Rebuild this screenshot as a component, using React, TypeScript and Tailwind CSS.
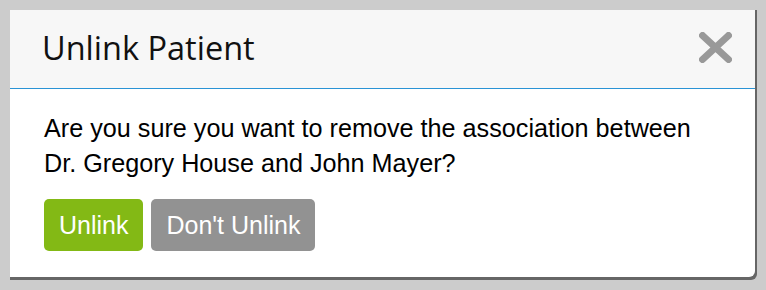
import React from "react";

const CloseIcon = () => (
  <svg width="33" height="31" viewBox="0 0 33 31" fill="none">
    <path d="M3.5 3.5 L29.5 27.5 M29.5 3.5 L3.5 27.5" stroke="#999999" strokeWidth="7" strokeLinecap="round" />
  </svg>
);

export default function App() {
  return (
    <div className="w-[766px] h-[290px] bg-[#cccccc] pt-[10px] pl-[10px]">
      {/* dark edge of the page underneath */}
      <div className="w-[747px] bg-[#666666] pr-[2px] pb-[3px] rounded-br-[6px]">
        <div className="w-[745px] bg-white rounded-br-[6px] overflow-hidden">
          {/* Header */}
          <div className="flex items-start justify-between bg-[#f7f7f7] border-b border-[#2a93d5] pl-[32px] pr-[23px] pt-[16px] pb-[18px]">
            <h2
              className="text-[32.5px] leading-[44px] text-[#111111]"
              style={{ fontFamily: '"Open Sans", sans-serif' }}
            >
              Unlink Patient
            </h2>
            <button className="mt-[6px]">
              <CloseIcon />
            </button>
          </div>

          {/* Body */}
          <div
            className="px-[34px] pt-[22px] pb-[26px]"
            style={{ fontFamily: '"Liberation Sans", Arial, sans-serif' }}
          >
            <p className="text-[25.2px] leading-[35px] text-black">
              Are you sure you want to remove the association between
              <br />
              Dr. Gregory House and John Mayer?
            </p>
            <div className="flex gap-[8px] mt-[18px]">
              <button className="h-[52px] leading-[52px] px-[15px] text-[25px] text-white bg-[#83b915] rounded-[5px]">
                Unlink
              </button>
              <button className="h-[52px] leading-[52px] px-[15px] text-[25px] text-white bg-[#929292] rounded-[5px]">
                Don't Unlink
              </button>
            </div>
          </div>
        </div>
      </div>
    </div>
  );
}
